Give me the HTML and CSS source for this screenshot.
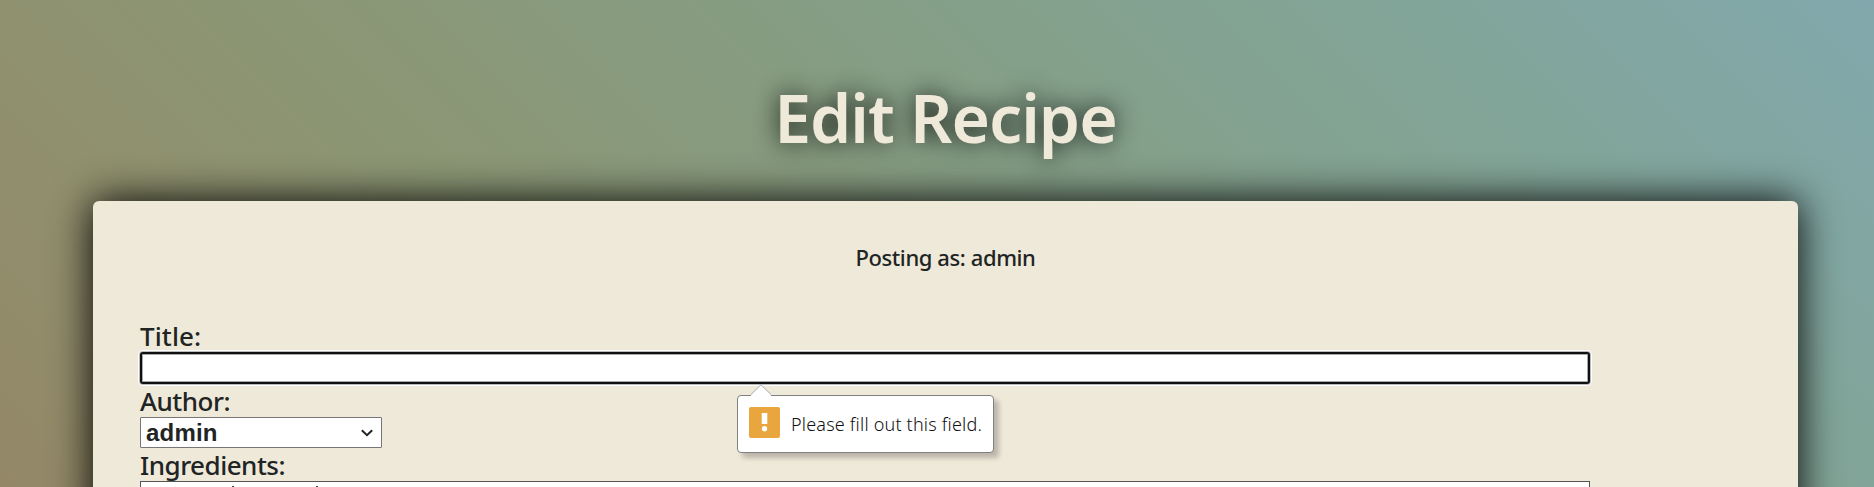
FILE: index.html
```html
<!DOCTYPE html>
<html lang="en">
<head>
<meta charset="utf-8">
<title>Edit Recipe</title>
<link rel="stylesheet" href="styles.css">
</head>
<body>
<main class="page">
  <h1 class="heading"><span class="heading-text">Edit Recipe</span></h1>
  <section class="card">
    <p class="posting"><span class="posting-text">Posting as: admin</span></p>
    <form class="form">
      <label class="label label-title" for="title">Title:</label>
      <div class="field">
        <input class="input" id="title" type="text">
        <div class="tip">
          <svg class="tip-arrow" width="20" height="12" viewBox="0 0 20 12"><path d="M0 11 L10 .7 L20 11V12H0z" fill="#fff"/><path d="M0 10.5 L10 .7 L20 10.5" fill="none" stroke="#aaa"/></svg>
          <svg class="tip-icon" width="31" height="31" viewBox="0 0 31 31"><rect width="31" height="31" rx="2" fill="#e9a63f"/><path d="M12.7 6h5.6v11h-5.6z" fill="#fff"/><circle cx="15.5" cy="21.7" r="2.7" fill="#fff"/></svg>
          <span class="tip-text">Please fill out this field.</span>
        </div>
      </div>
      <label class="label label-author">Author:</label>
      <div class="select"><span class="select-text">admin</span>
        <svg class="chevron" width="12" height="8" viewBox="0 0 12 8"><path d="M.8 1.2 L6 6.2 L11.2 1.2" fill="none" stroke="#212424" stroke-width="2"/></svg>
      </div>
      <label class="label label-ingredients">Ingredients:</label>
      <div class="textarea"><span class="mark"></span><span class="mark"></span></div>
    </form>
  </section>
</main>
</body>
</html>
```
FILE: styles.css
```css
* { box-sizing: border-box; }
html { overflow: hidden; }
body {
  margin: 0;
  height: 487px;
  overflow: hidden;
  color: #212424;
  font-family: "Noto Sans", sans-serif;
  background: linear-gradient(45deg, #938766 0%, #90916f 19%, #8b9674 32%, #84a08a 62%, #82a59a 81%, #82a8ad 100%);
}
.page { height: 487px; padding: 0 76px 0 93px; overflow: hidden; }
.heading {
  margin: 0;
  height: 201px;
  padding-top: 69px;
  text-align: center;
  color: #efe9d9;
  font-size: 66px;
  line-height: 96px;
  font-weight: 600;
  letter-spacing: -1px;
  text-shadow: 0 0 25px rgba(0,0,0,.9);
}
.card {
  height: 360px;
  padding: 40px 47px 0;
  border-radius: 6px;
  background: #efe9d9;
  box-shadow: 0 0 40px #000;
}
.posting {
  margin: 0 0 47px;
  text-align: center;
  font-size: 22px;
  line-height: 32px;
  font-weight: 500;
  letter-spacing: -.4px;
}
.label {
  display: block;
  height: 32px;
  font-size: 26px;
  line-height: 32px;
  font-weight: 500;
  letter-spacing: -.5px;
}
.label-title { letter-spacing: .1px; }
.label-author, .label-ingredients { margin-top: 1px; }
.field { position: relative; width: 1450px; }
.input {
  display: block;
  width: 100%;
  height: 32px;
  border: 2px solid #101010;
  outline: none;
  border-radius: 3px;
  background: #fff;
  box-shadow: inset 0 0 0 1px #aaa, 0 0 0 1px #bbb, 0 0 0 2px #fff;
}
.tip {
  position: absolute;
  z-index: 2;
  left: 597px;
  top: 43px;
  width: 257px;
  height: 58px;
  display: flex;
  align-items: flex-start;
  gap: 11px;
  padding: 11px 0 0 11px;
  border: 1px solid #808080;
  border-radius: 4px;
  background: #fff;
  box-shadow: 5px 5px 5px rgba(0,0,0,.22);
}
.tip-arrow { position: absolute; left: 13px; top: -12px; }
.tip-text { color: #111; font-size: 18px; line-height: 34px; font-weight: 300; letter-spacing: .2px; white-space: nowrap; }
.select {
  display: flex;
  align-items: center;
  justify-content: space-between;
  width: 242px;
  height: 31px;
  padding: 0 8px 0 5px;
  border: 1px solid #767676;
  border-radius: 1px;
  background: #fff;
  font-family: "Liberation Sans", sans-serif;
  font-size: 24px;
  font-weight: 700;
  letter-spacing: .2px;
}
.textarea {
  display: flex;
  gap: 82px;
  width: 1450px;
  height: 60px;
  padding: 4px 0 0 91px;
  border: 1px solid #555;
  background: #fff;
}
.mark { width: 2px; height: 1px; background: #444; }
```
